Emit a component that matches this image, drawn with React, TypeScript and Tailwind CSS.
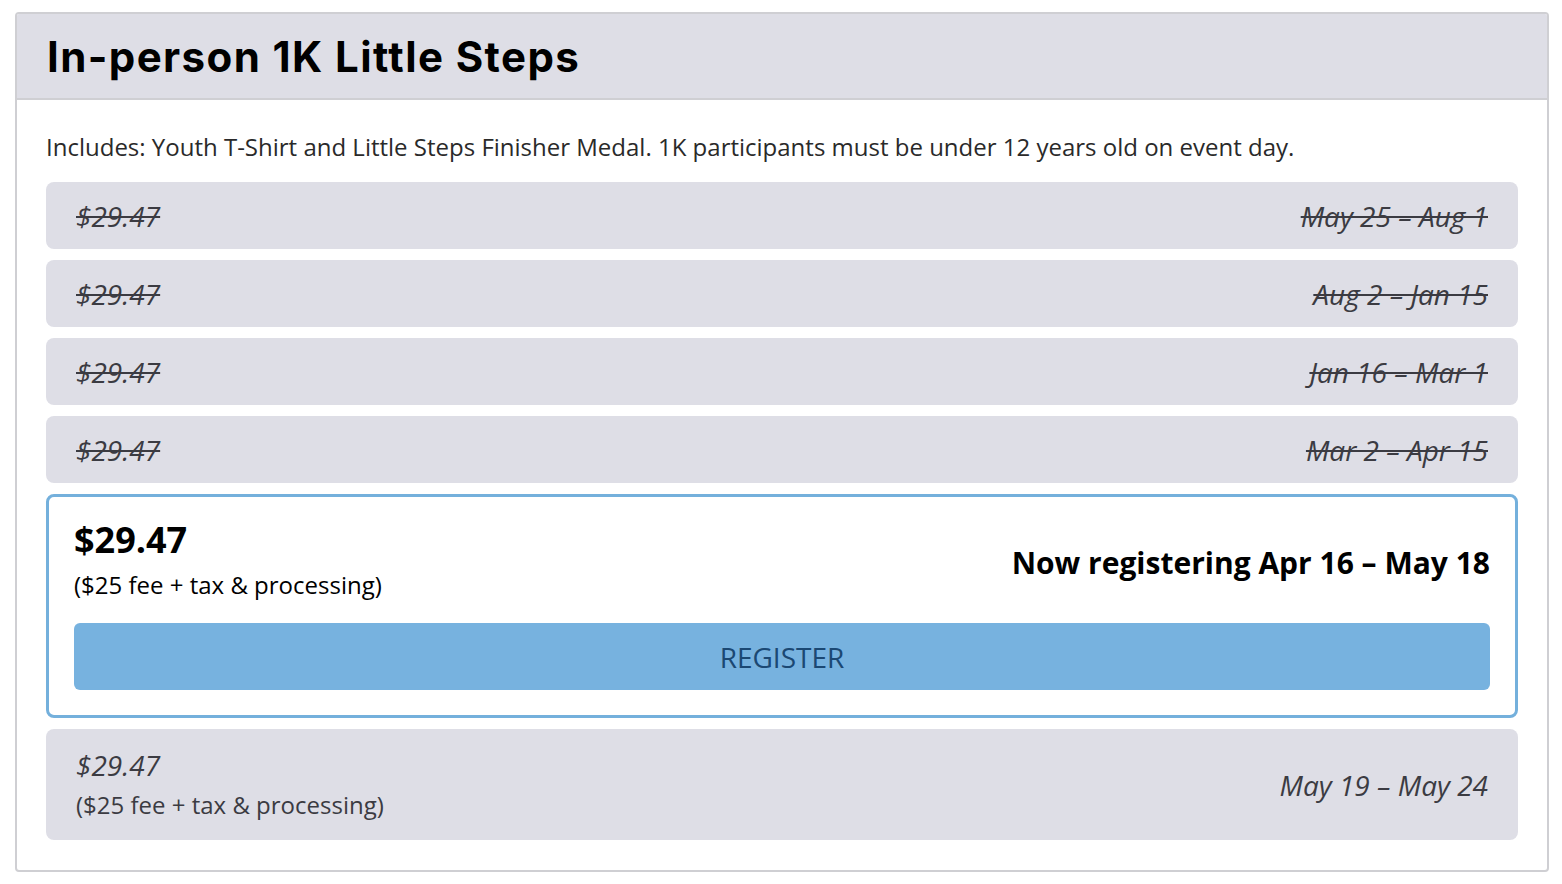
const past = [
  { price: "$29.47", dates: "May 25 – Aug 1" },
  { price: "$29.47", dates: "Aug 2 – Jan 15" },
  { price: "$29.47", dates: "Jan 16 – Mar 1" },
  { price: "$29.47", dates: "Mar 2 – Apr 15" },
];

export default function App() {
  return (
    <div className="min-h-screen bg-white pt-[12px] px-[15px] font-['Open_Sans',sans-serif]">
      <div className="w-[1534px] border-2 border-[#cfcfd3] rounded-[4px] overflow-hidden">
        <div className="bg-[#dedee6] border-b-2 border-[#cfcfd3] h-[86px] flex items-center px-[30px]">
          <h2 className="font-['Inter',sans-serif] font-bold text-[42px] text-black tracking-[1.4px]">
            In-person 1K Little Steps
          </h2>
        </div>
        <div className="px-[29px] pt-[31px] pb-[30px]">
          <p className="text-[24px] text-[#2a2a2a] leading-[32px] mb-[19px]">
            Includes: Youth T-Shirt and Little Steps Finisher Medal. 1K participants must be under 12 years old on event day.
          </p>
          <div className="flex flex-col gap-[11px]">
            {past.map((p, i) => (
              <div
                key={i}
                className="h-[67px] bg-[#dedee6] rounded-[8px] px-[30px] flex items-center justify-between italic line-through text-[28px] text-[#3b3b42]"
              >
                <span>{p.price}</span>
                <span>{p.dates}</span>
              </div>
            ))}
            <div className="border-[3px] border-[#74b0dc] rounded-[8px] px-[25px] pt-[21px] pb-[25px]">
              <div className="flex items-center justify-between">
                <div>
                  <div className="text-[36px] font-bold leading-[44px] text-black">$29.47</div>
                  <div className="mt-[6px] text-[24px] leading-[34px] text-black">($25 fee + tax &amp; processing)</div>
                </div>
                <div className="text-[30px] font-bold text-black pt-[4px]">Now registering Apr 16 – May 18</div>
              </div>
              <button className="mt-[21px] w-full h-[67px] bg-[#77b2df] rounded-[6px] text-[28px] text-[#1b4873] uppercase">
                Register
              </button>
            </div>
            <div className="bg-[#dedee6] rounded-[8px] px-[30px] h-[111px] shrink-0 flex items-center justify-between text-[#3b3b42]">
              <div>
                <div className="text-[28px] italic leading-[36px]">$29.47</div>
                <div className="mt-[4px] text-[24px] leading-[36px]">($25 fee + tax &amp; processing)</div>
              </div>
              <div className="text-[28px] italic">May 19 – May 24</div>
            </div>
          </div>
        </div>
      </div>
    </div>
  );
}
